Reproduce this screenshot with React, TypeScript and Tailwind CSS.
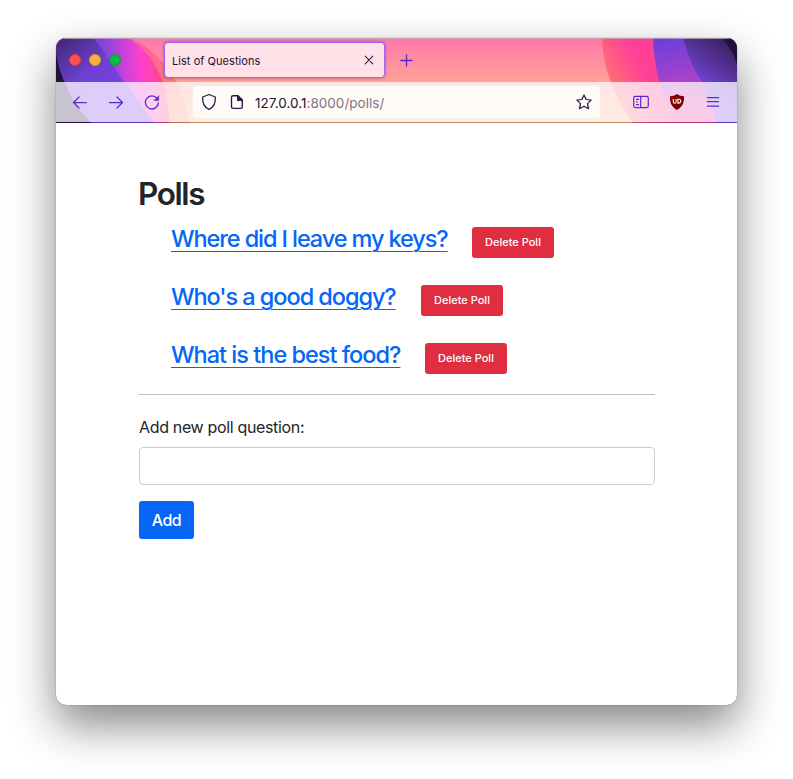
import React from "react";

const INK = "#2b1b4a";
const VIOLET = "#592acb";

const polls = [
  { text: "Where did I leave my keys?", width: "w-[277px]", spacing: "tracking-[-1.09px]" },
  { text: "Who's a good doggy?", width: "w-[226px]", spacing: "tracking-[-1.06px]" },
  { text: "What is the best food?", width: "w-[230px]", spacing: "tracking-[-0.99px]" },
];

function ThemeArt() {
  return (
    <svg className="absolute inset-0" width="681" height="85" viewBox="0 0 681 85" aria-hidden="true">
      <defs>
        <linearGradient id="sky" x1="0" y1="0" x2="0" y2="85" gradientUnits="userSpaceOnUse">
          <stop offset="0" stopColor="#ff78ab" />
          <stop offset=".5" stopColor="#ffa196" />
          <stop offset="1" stopColor="#ffc480" />
        </linearGradient>
        <linearGradient id="coral" x1="80" y1="0" x2="110" y2="85" gradientUnits="userSpaceOnUse">
          <stop offset="0" stopColor="#ff5c9e" />
          <stop offset=".5" stopColor="#ff7480" />
          <stop offset="1" stopColor="#ff9868" />
        </linearGradient>
        <linearGradient id="pink" x1="46" y1="24" x2="104" y2="20" gradientUnits="userSpaceOnUse">
          <stop offset="0" stopColor="#7b42dc" />
          <stop offset=".4" stopColor="#cc42d8" />
          <stop offset=".68" stopColor="#ff40d0" />
          <stop offset="1" stopColor="#ff478c" />
        </linearGradient>
        <linearGradient id="violet" x1="2" y1="0" x2="48" y2="60" gradientUnits="userSpaceOnUse">
          <stop offset="0" stopColor="#43276f" />
          <stop offset=".6" stopColor="#6d40d2" />
          <stop offset="1" stopColor="#7542e5" />
        </linearGradient>
        <linearGradient id="rpink" x1="550" y1="44" x2="600" y2="14" gradientUnits="userSpaceOnUse">
          <stop offset="0" stopColor="#ff746f" />
          <stop offset=".65" stopColor="#ff4296" />
          <stop offset="1" stopColor="#ff3f94" />
        </linearGradient>
        <linearGradient id="rviolet" x1="610" y1="0" x2="622" y2="85" gradientUnits="userSpaceOnUse">
          <stop offset="0" stopColor="#6b3edb" />
          <stop offset=".5" stopColor="#a743ca" />
          <stop offset="1" stopColor="#ee3d96" />
        </linearGradient>
        <linearGradient id="rdeep" x1="672" y1="8" x2="642" y2="50" gradientUnits="userSpaceOnUse">
          <stop offset="0" stopColor="#402365" />
          <stop offset="1" stopColor="#7548e5" />
        </linearGradient>
      </defs>
      <path d="M0 0H681V85H0Z" fill="url(#sky)" />
      <path d="M72 0C96 7 126 37 134 85H0V0Z" fill="url(#coral)" />
      <path d="M72 0C96 14 113 42 113 85H0V0Z" fill="url(#pink)" />
      <path d="M38 0Q44 9 68 44Q86 67 98 85H0V0Z" fill="url(#violet)" />
      <path d="M0 15Q2 31 12 52Q20 69 35 85H0Z" fill="#20123a" />
      <path d="M546 0Q547 42 577 85H681V0Z" fill="url(#rpink)" />
      <path d="M597 0Q598 43 619 85H681V0Z" fill="url(#rviolet)" />
      <path d="M627 0Q635 29 646 44Q656 62 659 85H681V0Z" fill="url(#rdeep)" />
      <path d="M666 0Q678 13 681 27V0Z" fill="#20123a" />
    </svg>
  );
}

function ArrowIcon({ flip = false }: { flip?: boolean }) {
  return (
    <svg className={flip ? "-scale-x-100" : ""} width="16" height="16" viewBox="0 0 16 16" fill="none" stroke={VIOLET} strokeWidth="1.25" strokeLinecap="round" strokeLinejoin="round">
      <path d="M14.5 8.5H1.5M7 3L1.5 8.5L7 14" />
    </svg>
  );
}

function ReloadIcon() {
  return (
    <svg width="16" height="16" viewBox="0 0 16 16" fill="none" stroke={VIOLET} strokeWidth="1.3" strokeLinecap="round">
      <path d="M13 4.4A6.5 6.5 0 1 0 14.4 8.9" />
      <path d="M14.7 2V6.5H10.2Z" fill={VIOLET} strokeWidth=".5" strokeLinejoin="round" />
    </svg>
  );
}

function TitleBar() {
  return (
    <div className="relative flex h-11 items-start">
      <div className="flex gap-2 pl-[13px] pt-4">
        <span className="size-3 rounded-full border border-[#e4383d] bg-[#ff5350]" />
        <span className="size-3 rounded-full border border-[#e19027] bg-[#ffb239]" />
        <span className="size-3 rounded-full border border-[#079b34] bg-[#09bd43]" />
      </div>
      <div className="ml-[43px] mt-1 flex h-9 w-[221px] items-center justify-between rounded-[4px] border border-[#a363f8] bg-[#ffe1e7] pl-[7px] pr-[10px] shadow-[0_0_3px_rgba(60,10,70,0.5)]">
        <span className="whitespace-nowrap pt-[2px] text-[11px] tracking-[0.05px] text-[#20123a]">List of Questions</span>
        <svg width="10" height="10" viewBox="0 0 10 10" stroke={INK} strokeWidth="1.1" strokeLinecap="round">
          <path d="M1.2 1.2L8.8 8.8M8.8 1.2L1.2 8.8" />
        </svg>
      </div>
      <svg className="ml-[15px] mt-4" width="13" height="13" viewBox="0 0 13 13" stroke={VIOLET} strokeWidth="1.3" strokeLinecap="round">
        <path d="M6.5 .9V12.1M.9 6.5H12.1" />
      </svg>
    </div>
  );
}

function Toolbar() {
  return (
    <div className="relative flex h-10 items-center bg-[#fffaff]/[0.76]">
      <div className="flex w-[137px] items-center gap-5 pl-4">
        <ArrowIcon />
        <ArrowIcon flip />
        <ReloadIcon />
      </div>
      <div className="flex h-8 w-[407px] items-center rounded-[4px] bg-[#fffdfa]/90 pl-2 pr-2">
        <svg width="16" height="18" viewBox="0 0 16 18" fill="none" stroke={INK} strokeWidth="1.3" strokeLinejoin="round">
          <path d="M8 1.5L14.3 4C14.7 9 13 14.2 8 16.4C3 14.2 1.3 9 1.7 4Z" />
        </svg>
        <svg className="ml-[13px]" width="14" height="16" viewBox="0 0 14 16" fill="none" stroke={INK} strokeWidth="1.35" strokeLinejoin="round">
          <path d="M3 1.7H8L12.3 6V12.8Q12.3 14.3 10.8 14.3H3Q1.5 14.3 1.5 12.8V3.2Q1.5 1.7 3 1.7Z" />
          <path d="M7.7 1.7V6.3H12.3Z" fill={INK} />
        </svg>
        <span className="ml-[11px] whitespace-nowrap pt-[2px] text-[13.5px] tracking-[0.02px] text-[#807389]">
          <span className="text-[#20123a]">127.0.0.1</span>:8000/polls/
        </span>
        <svg className="ml-auto" width="16" height="16" viewBox="0 0 16 16" fill="none" stroke={INK} strokeWidth="1.25" strokeLinejoin="round">
          <path d="M8 .9L10.1 5.5L15.1 6.1L11.5 9.6L12.5 14.7L8 12.2L3.5 14.7L4.5 9.6L.9 6.1L5.9 5.5Z" />
        </svg>
      </div>
      <div className="ml-[33px] flex items-center gap-5">
        <svg width="16" height="14" viewBox="0 0 16 14" fill="none" stroke={VIOLET} strokeWidth="1.2">
          <rect x=".7" y="1.4" width="14.6" height="11.2" rx="1.5" />
          <path d="M7.7 1.4V12.6M3 4.3H6M3 7H5M3 9.7H6" />
        </svg>
        <svg width="16" height="18" viewBox="0 0 16 18">
          <path d="M8 1C10 2.7 12.6 3.2 15 3.2C15.2 9.4 13.8 13.7 8 16.9C2.2 13.7.8 9.4 1 3.2C3.4 3.2 6 2.7 8 1Z" fill="#800000" />
          <path d="M4.3 6V8.7Q4.3 10.2 5.7 10.2Q7.1 10.2 7.1 8.7V6M8.9 6.3V10.1H9.9A1.9 1.9 0 0 0 9.9 6.3Z" fill="none" stroke="white" strokeWidth="1.1" />
        </svg>
        <svg width="16" height="14" viewBox="0 0 16 14" stroke={VIOLET} strokeWidth="1.25" strokeLinecap="round">
          <path d="M2.4 2.5H13.6M2.4 6.5H13.6M2.4 11H13.6" />
        </svg>
      </div>
    </div>
  );
}

export default function App() {
  return (
    <div className="h-[779px] w-[793px] overflow-hidden bg-white pl-14 pt-[38px] font-[Inter,'Liberation_Sans',sans-serif]">
      <div className="h-[667px] w-[681px] rounded-[10px] bg-white shadow-[0_0_1px_rgba(0,0,0,0.7),0_20px_45px_rgba(0,0,0,0.48)]">
        <div className="h-full w-full overflow-hidden rounded-[10px]">
          <header className="relative h-[85px]">
            <ThemeArt />
            <div className="absolute inset-x-0 top-0 h-px bg-[#b9abb3]/80" />
            <div className="absolute inset-x-0 bottom-0 h-px bg-[#20123a]/30" />
            <TitleBar />
            <Toolbar />
          </header>
          <main className="pl-[83px] pt-[52px] text-[#212529]">
            <h1 className="ml-[-1px] h-[38px] whitespace-nowrap text-[31.5px] font-semibold leading-[38px] tracking-[-1.4px]">Polls</h1>
            <ul className="mt-2 pl-8">
              {polls.map((poll) => (
                <li key={poll.text} className="flex h-[58px] items-start">
                  <a className={`${poll.width} ${poll.spacing} mt-[3px] h-[30px] whitespace-nowrap text-[23.5px] font-medium leading-[30px] text-[#0566f7] underline decoration-1 underline-offset-[4px]`}>
                    {poll.text}
                  </a>
                  <button className="ml-6 mt-[6px] h-[31px] w-[82px] whitespace-nowrap rounded-[3px] bg-[#e02d40] text-[11px] font-medium text-white">Delete Poll</button>
                </li>
              ))}
            </ul>
            <hr className="mt-[-1px] h-px w-[516px] border-0 bg-[#bcbdbf]" />
            <form>
              <label className="mt-5 block h-6 whitespace-nowrap text-[16px] leading-6 tracking-[-0.34px]">Add new poll question:</label>
              <input className="mt-2 block h-[38px] w-[516px] rounded-[4px] border border-[#c8cdd2] bg-white" />
              <button type="button" className="mt-4 h-[38px] w-[55px] rounded-[3px] bg-[#0566f7] text-[16px] font-medium tracking-[-0.5px] text-white">Add</button>
            </form>
          </main>
        </div>
      </div>
    </div>
  );
}
